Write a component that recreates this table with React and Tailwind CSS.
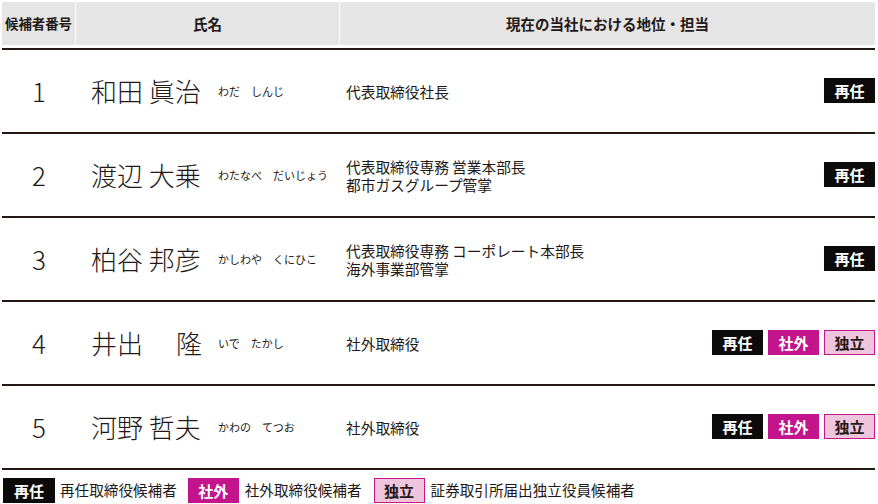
const candidates = [
  { no: "1", name: "和田 眞治", kana: "わだ　しんじ", role: ["代表取締役社長"], tags: ["re"] },
  { no: "2", name: "渡辺 大乗", kana: "わたなべ　だいじょう", role: ["代表取締役専務 営業本部長", "都市ガスグループ管掌"], tags: ["re"] },
  { no: "3", name: "柏谷 邦彦", kana: "かしわや　くにひこ", role: ["代表取締役専務 コーポレート本部長", "海外事業部管掌"], tags: ["re"] },
  { no: "4", name: "井出　隆", kana: "いで　たかし", role: ["社外取締役"], tags: ["re", "out", "ind"], spread: true },
  { no: "5", name: "河野 哲夫", kana: "かわの　てつお", role: ["社外取締役"], tags: ["re", "out", "ind"] },
];

const Badge = ({ kind, wide }) => {
  const base = `${wide ? "w-[52px]" : "w-[51px]"} h-[25px] flex items-center justify-center text-[15px] font-bold leading-none shrink-0`;
  if (kind === "re") return <div className={`${base} bg-[#0d0a0b] text-white`}>再任</div>;
  if (kind === "out") return <div className={`${base} bg-[#c4148c] text-white`}>社外</div>;
  return <div className={`${base} bg-[#efc5de] text-[#231815] border-[1.5px] border-[#c8168b]`}>独立</div>;
};

export default function App() {
  return (
    <div
      className="w-[873px] ml-[2px] pt-[2px] text-[#231815] bg-white"
      style={{ fontFamily: '"Noto Sans CJK JP", "Noto Sans", sans-serif' }}
    >
      <div className="grid grid-cols-[73px_263px_535px] gap-x-px h-[43px] text-[14.5px] font-bold">
        <div className="bg-[#e5e5e5] flex items-center justify-center whitespace-nowrap text-[13.4px]">候補者番号</div>
        <div className="bg-[#e5e5e5] flex items-center justify-center">氏名</div>
        <div className="bg-[#e5e5e5] flex items-center justify-center">現在の当社における地位・担当</div>
      </div>
      <div className="mt-[3px] border-t-2 border-[#231815]">
        {candidates.map((c) => (
          <div key={c.no} className="h-[84px] border-b-2 border-[#231815] flex items-center">
            <div className="w-[74px] text-center text-[26px] font-light leading-none">{c.no}</div>
            <div className="w-[264px] flex items-center pl-[15px]">
              {c.spread ? (
                <div className="w-[127px] text-[26px] font-light leading-none">
                  <div className="w-[111px] flex justify-between">
                    <span>井出</span>
                    <span>隆</span>
                  </div>
                </div>
              ) : (
                <div className="w-[127px] text-[26px] font-light leading-none whitespace-nowrap">{c.name}</div>
              )}
              <div className="text-[11px] leading-none whitespace-nowrap">{c.kana}</div>
            </div>
            <div className="flex-1 pl-[6px] text-[14.7px] leading-[18px] flex flex-col gap-px">
              {c.role.map((r) => (
                <div key={r} className="whitespace-nowrap leading-[17px]">{r}</div>
              ))}
            </div>
            <div className="flex gap-[5px] pb-[2px]">
              {c.tags.map((t) => (
                <Badge key={t} kind={t} />
              ))}
            </div>
          </div>
        ))}
      </div>
      <div className="mt-[8px] flex items-center text-[14.6px] leading-none">
        <div className="ml-px">
          <Badge kind="re" wide />
        </div>
        <span className="ml-[5px]">再任取締役候補者</span>
        <div className="ml-[11px]">
          <Badge kind="out" />
        </div>
        <span className="ml-[6px]">社外取締役候補者</span>
        <div className="ml-[12px]">
          <Badge kind="ind" />
        </div>
        <span className="ml-[6px]">証券取引所届出独立役員候補者</span>
      </div>
    </div>
  );
}
